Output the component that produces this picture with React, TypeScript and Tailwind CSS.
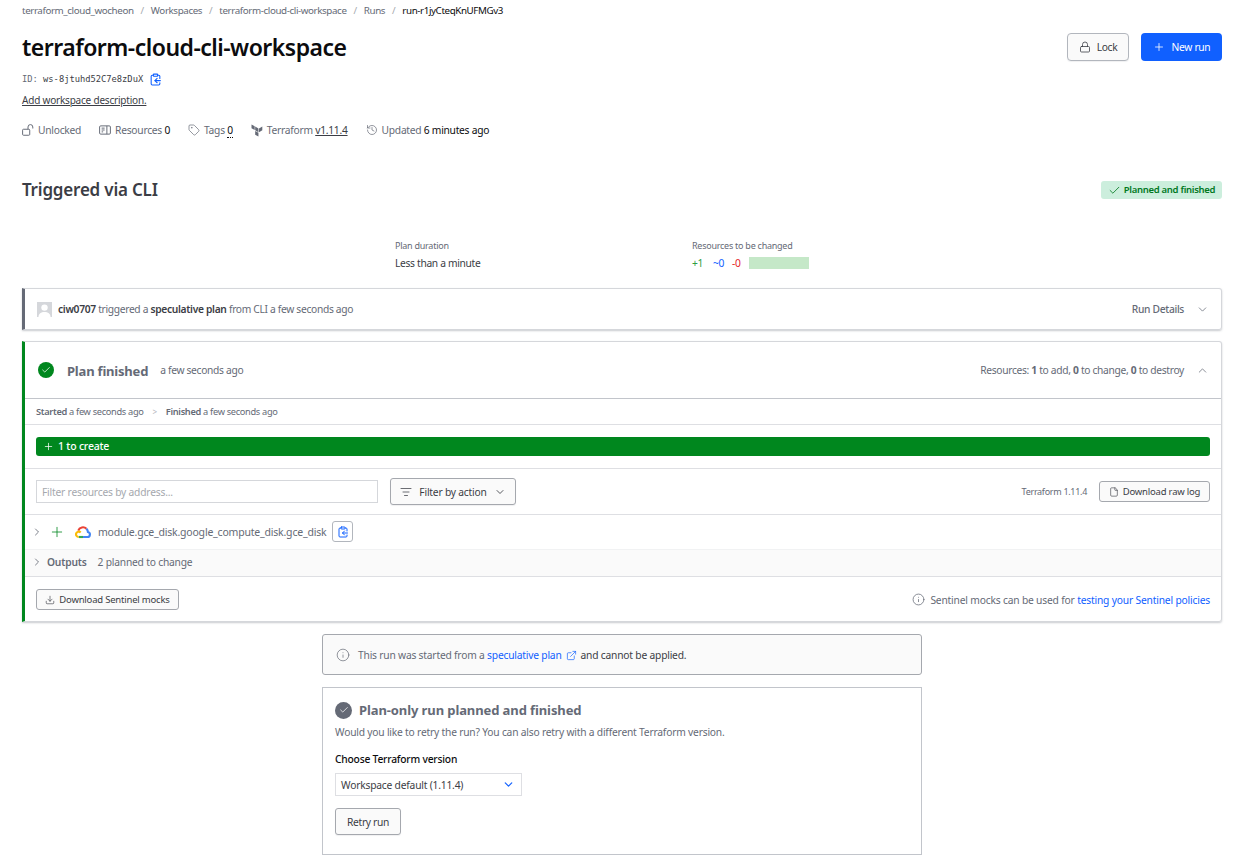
import React from "react";
import { Lock, Plus, Check, ChevronDown, ChevronUp, ChevronRight, Tag, History, ClipboardCopy, ListFilter, File, Download, Info, ExternalLink } from "lucide-react";

function TerraformLogo() {
  return (
    <svg width="12" height="13" viewBox="1.5 1.5 12 13.5" fill="#656a76">
      <path d="M5.600 4.200v3.900L9 10V6.200z" />
      <path d="M9.600 6.200V10L13 8.100V4.200z" />
      <path d="M1.800 2v3.900l3.300 1.900V3.900z" />
      <path d="M5.600 8.700v3.900L9 14.500v-3.900z" />
    </svg>
  );
}

function GoogleCloudLogo() {
  return (
    <svg width="16" height="14" viewBox="0 0 24 20" fill="none" strokeWidth="3.2">
      <path stroke="#EA4335" d="M4.900 8A7.400 7.400 0 0 1 17.200 5.200" />
      <path stroke="#4285F4" d="M17.200 5.200A7.400 7.400 0 0 1 19.400 10A3.800 3.800 0 0 1 18.500 17.500H12" />
      <path stroke="#34A853" d="M12 17.500H5.500" />
      <path stroke="#FBBC05" d="M5.500 17.500A4 4 0 1 1 8.500 10.800" />
    </svg>
  );
}

function OpenLockIcon() {
  return (
    <svg width="12" height="12" viewBox="0 0 16 16" fill="none" stroke="currentColor" strokeWidth="1.300">
      <rect x="0.800" y="7" width="9.500" height="8" rx="1.200" />
      <path d="M8 7V4a3.200 3.200 0 0 1 6.400 0v2" />
    </svg>
  );
}

function ResourcesIcon() {
  return (
    <svg width="12" height="12" viewBox="0 0 16 16" fill="none" stroke="currentColor" strokeWidth="1.300">
      <rect x="0.800" y="2.500" width="14.400" height="11" rx="1.500" />
      <path d="M10.500 2.500v11M3.500 5.500h4M3.500 8h4M3.500 10.500h2" />
    </svg>
  );
}

function Slash() {
  return <span className="mx-[7px] text-[#a5a8ae]">/</span>;
}

function Meta({ icon, children }: { icon: React.ReactNode; children: React.ReactNode }) {
  return (
    <div className="flex items-center gap-[4px] text-[#656a76]">
      {icon}
      <span>{children}</span>
    </div>
  );
}

export default function App() {
  return (
    <div className="min-h-[859px] bg-white pl-[22px] pr-[20px] font-['Noto_Sans','Open_Sans',sans-serif] text-[10.25px] leading-[14px] text-[#3b3d45] tracking-[-0.32px] overflow-hidden">
      {/* breadcrumb */}
      <nav className="flex h-[23px] items-center pb-[1px] text-[#656a76] text-[9.8px] tracking-[-0.4px]">
        <span>terraform_cloud_wocheon</span>
        <Slash />
        <span>Workspaces</span>
        <Slash />
        <span>terraform-cloud-cli-workspace</span>
        <Slash />
        <span>Runs</span>
        <Slash />
        <span className="text-[#0c0c0e]">run-r1jyCteqKnUFMGv3</span>
      </nav>

      {/* header */}
      <div className="flex h-[47px] items-center justify-between">
        <h1 className="text-[23px] font-semibold leading-[30px] text-[#0c0c0e] tracking-[-0.52px]">terraform-cloud-cli-workspace</h1>
        <div className="flex gap-[12px] pt-[1px]">
          <button className="flex h-[28px] w-[62px] items-center justify-center gap-[6px] rounded-[4px] border border-[#b2b6bd] bg-[#fafafa] text-[#3b3d45] shadow-[0_1px_1px_rgba(101,106,118,0.1)]">
            <Lock size={12} strokeWidth={1.6} />
            Lock
          </button>
          <button className="flex h-[28px] w-[81px] items-center justify-center gap-[7px] rounded-[4px] bg-[#1060ff] text-white">
            <Plus size={12} strokeWidth={1.6} />
            New run
          </button>
        </div>
      </div>

      <div className="mt-[1px] flex h-[16px] items-center gap-[5px] font-['DejaVu_Sans_Mono','Liberation_Mono',monospace] text-[8.75px] text-[#3b3d45] tracking-normal">
        <span><span className="text-[#656a76]">ID:</span> ws-8jtuhd52C7e8zDuX</span>
        <ClipboardCopy size={13} strokeWidth={2} className="ml-[1px] text-[#1060ff]" />
      </div>

      <div className="mt-[6px] h-[14px] text-[10px] tracking-[-0.2px] text-[#3b3d45] underline">Add workspace description.</div>

      <div className="mt-[16px] flex h-[14px] items-center gap-[18px] tracking-[-0.26px]">
        <Meta icon={<OpenLockIcon />}>Unlocked</Meta>
        <Meta icon={<ResourcesIcon />}>
          Resources <span className="text-[#0c0c0e]">0</span>
        </Meta>
        <Meta icon={<Tag size={12} strokeWidth={1.4} />}>
          Tags <span className="border-b border-dotted border-[#0c0c0e] text-[#0c0c0e]">0</span>
        </Meta>
        <Meta icon={<TerraformLogo />}>
          Terraform <span className="text-[#3b3d45] underline">v1.11.4</span>
        </Meta>
        <Meta icon={<History size={12} strokeWidth={1.4} />}>
          Updated <span className="text-[#0c0c0e]">6 minutes ago</span>
        </Meta>
      </div>

      {/* title */}
      <div className="mt-[40px] flex h-[26px] items-center justify-between">
        <h2 className="text-[17px] font-semibold tracking-[-0.2px] text-[#3b3d45]">Triggered via CLI</h2>
        <div className="flex h-[18px] w-[121px] items-center justify-center gap-[3px] rounded-[3px] bg-[#cceedd] text-[9.5px] font-semibold text-[#00781e] tracking-[-0.3px]">
          <Check size={13} strokeWidth={1.5} />
          Planned and finished
        </div>
      </div>

      {/* stats */}
      <div className="mt-[36px] flex pl-[373px]">
        <div className="w-[297px]">
          <div className="text-[9px] leading-[14px] tracking-[-0.25px] text-[#656a76]">Plan duration</div>
          <div className="mt-[3px] text-[#3b3d45]">Less than a minute</div>
        </div>
        <div>
          <div className="text-[9px] leading-[14px] tracking-[-0.25px] text-[#656a76]">Resources to be changed</div>
          <div className="mt-[3px] flex h-[14px] items-center">
            <span className="w-[21px] text-[#2f9e44]">+1</span>
            <span className="w-[19px] text-[#1060ff]">~0</span>
            <span className="w-[17px] text-[#e52228]">-0</span>
            <span className="h-[12px] w-[60px] bg-[#c5e8c8]" />
          </div>
        </div>
      </div>

      {/* run details card */}
      <div className="mt-[18px] flex h-[42px] items-center justify-between rounded-r-[3px] border border-l-[3px] border-[#d5d7db] border-l-[#656a76] pl-[12px] pr-[12px] shadow-[0_1px_2px_rgba(101,106,118,0.35)]">
        <div className="flex items-center gap-[6px] text-[#656a76]">
          <span className="flex h-[15px] w-[15px] items-end justify-center overflow-hidden bg-[#d5d7db]">
            <svg width="15" height="15" viewBox="0 0 15 15" fill="#fff"><circle cx="7.500" cy="5.600" r="3.200" /><path d="M1.500 15c0-3.500 2.500-5 6-5s6 1.500 6 5z" /></svg>
          </span>
          <span>
            <b className="font-semibold text-[#3b3d45]">ciw0707</b> triggered a <b className="font-semibold text-[#3b3d45]">speculative plan</b> from CLI a few seconds ago
          </span>
        </div>
        <div className="flex items-center gap-[12px] text-[#656a76]">
          <span className="font-medium">Run Details</span>
          <ChevronDown size={13} strokeWidth={1.4} />
        </div>
      </div>

      {/* plan card */}
      <div className="mt-[11px] rounded-r-[3px] border border-l-[3px] border-[#d5d7db] border-l-[#00871e] shadow-[0_1px_2px_rgba(101,106,118,0.35)]">
        <div className="flex h-[57px] items-center justify-between border-b border-[#c2c5cb] pl-[13px] pr-[12px]">
          <div className="flex items-center">
            <span className="flex h-[16px] w-[16px] items-center justify-center rounded-full bg-[#00871e] text-white">
              <Check size={10} strokeWidth={1.8} />
            </span>
            <span className="ml-[13px] pt-[1px] text-[13px] font-bold tracking-[-0.2px] text-[#656a76]">Plan finished</span>
            <span className="ml-[12px] text-[#656a76]">a few seconds ago</span>
          </div>
          <div className="flex items-center gap-[12px] text-[#656a76]">
            <span>
              Resources: <b className="font-bold">1</b> to add, <b className="font-bold">0</b> to change, <b className="font-bold">0</b> to destroy
            </span>
            <ChevronUp size={13} strokeWidth={1.4} />
          </div>
        </div>

        <div className="flex h-[26px] items-center border-b border-[#dedfe3] pl-[11px] text-[9.25px] tracking-[-0.32px] text-[#656a76]">
          <b className="font-semibold">Started</b>&nbsp;a few seconds ago
          <span className="mx-[9px] text-[8px] text-[#b2b6bd]">&gt;</span>
          <b className="font-semibold">Finished</b>&nbsp;a few seconds ago
        </div>

        <div className="flex h-[44px] items-center border-b border-[#dedfe3] pl-[11px] pr-[11px]">
          <div className="flex h-[19px] w-full items-center gap-[4px] rounded-[3px] bg-[#00871e] pb-[1px] pl-[7px] text-[10.5px] font-medium tracking-[-0.2px] text-white">
            <Plus size={11} strokeWidth={1.6} />
            1 to create
          </div>
        </div>

        <div className="flex h-[46px] items-center justify-between border-b border-[#dedfe3] pl-[11px] pr-[11px]">
          <div className="flex items-center">
            <div className="flex h-[23px] w-[342px] items-center border border-[#d5d7db] pl-[5px] tracking-[-0.2px] text-[#a5a8ae]">Filter resources by address...</div>
            <button className="ml-[12px] flex h-[27px] w-[126px] items-center justify-center gap-[7px] rounded-[3px] border border-[#a5a8ae] bg-[#fafafa] tracking-[-0.2px] text-[#3b3d45] shadow-[0_1px_1px_rgba(101,106,118,0.1)]">
              <ListFilter size={12} strokeWidth={1.5} />
              Filter by action
              <ChevronDown size={12} strokeWidth={1.7} />
            </button>
          </div>
          <div className="flex items-center gap-[12px]">
            <span className="text-[9px] tracking-[-0.3px] text-[#656a76]">Terraform 1.11.4</span>
            <button className="flex h-[21px] w-[111px] items-center justify-center gap-[4px] rounded-[3px] border border-[#a5a8ae] bg-[#fafafa] text-[9.5px] tracking-[-0.2px] text-[#3b3d45]">
              <File size={10} strokeWidth={1.5} />
              Download raw log
            </button>
          </div>
        </div>

        <div className="flex h-[34px] items-center pb-[1px] pl-[6px]">
          <ChevronRight size={12} strokeWidth={1.7} className="text-[#656a76]" />
          <Plus size={16} strokeWidth={1.2} className="ml-[6px] text-[#00871e]" />
          <span className="ml-[10px]"><GoogleCloudLogo /></span>
          <span className="ml-[7px] text-[10.5px] tracking-[-0.2px] text-[#656a76]">module.gce_disk.google_compute_disk.gce_disk</span>
          <span className="ml-[6px] flex h-[21px] w-[21px] items-center justify-center rounded-[3px] border border-[#b2b6bd]">
            <ClipboardCopy size={12} strokeWidth={2} className="text-[#1060ff]" />
          </span>
        </div>

        <div className="flex h-[28px] items-center border-b border-t border-[#f1f2f3] border-b-[#dedfe3] bg-[#fafafa] pb-[2px] pl-[6px] tracking-[-0.2px]">
          <ChevronRight size={12} strokeWidth={1.7} className="text-[#656a76]" />
          <b className="ml-[4px] font-semibold text-[#656a76]">Outputs</b>
          <span className="ml-[11px] text-[#656a76]">2 planned to change</span>
        </div>

        <div className="flex h-[44px] items-center justify-between pl-[11px] pr-[11px] pt-[1px]">
          <button className="flex h-[21px] w-[143px] items-center justify-center gap-[4px] rounded-[3px] border border-[#a5a8ae] bg-[#fafafa] text-[9.5px] tracking-[-0.2px] text-[#3b3d45]">
            <Download size={10} strokeWidth={1.5} />
            Download Sentinel mocks
          </button>
          <div className="flex items-center gap-[5px] tracking-[-0.18px] text-[#656a76]">
            <Info size={13} strokeWidth={1.4} />
            <span>Sentinel mocks can be used for <span className="text-[#1060ff]">testing your Sentinel policies</span></span>
          </div>
        </div>
      </div>

      {/* notice + retry */}
      <div className="mx-auto mt-[12px] w-[600px]">
        <div className="flex h-[41px] items-center gap-[8px] rounded-[3px] border border-[#a5a8ae] bg-[#fafafa] pl-[13px] text-[#656a76]">
          <Info size={14} strokeWidth={1.2} />
          <span className="tracking-[-0.2px] text-[#3b3d45]">
            <span className="text-[#656a76]">This run was started from a</span> <span className="text-[#1060ff]">speculative plan</span>
            <ExternalLink size={11} strokeWidth={1.5} className="mx-[4px] inline text-[#1060ff]" />
            and cannot be applied.
          </span>
        </div>

        <div className="mt-[12px] h-[168px] border border-[#c2c5cb] pl-[12px] pt-[13px]">
          <div className="flex h-[18px] items-center gap-[7px]">
            <span className="flex h-[17px] w-[17px] items-center justify-center rounded-full bg-[#656a76] text-white">
              <Check size={10} strokeWidth={1.8} />
            </span>
            <span className="text-[13px] font-bold tracking-[-0.1px] text-[#656a76]">Plan-only run planned and finished</span>
          </div>
          <div className="mt-[6px] tracking-[-0.2px] text-[#656a76]">Would you like to retry the run? You can also retry with a different Terraform version.</div>
          <div className="mt-[13px] tracking-[-0.2px] text-[#0c0c0e] font-medium">Choose Terraform version</div>
          <div className="mt-[7px] flex h-[23px] w-[187px] items-center justify-between border border-[#dedfe3] pl-[5px] pr-[6px] tracking-[-0.2px] text-[#3b3d45]">
            Workspace default (1.11.4)
            <ChevronDown size={13} strokeWidth={2.2} className="text-[#1060ff]" />
          </div>
          <button className="mt-[12px] flex h-[27px] w-[66px] items-center justify-center rounded-[3px] border border-[#a5a8ae] bg-[#fafafa] text-[#3b3d45] shadow-[0_1px_1px_rgba(101,106,118,0.1)]">Retry run</button>
        </div>
      </div>
    </div>
  );
}
